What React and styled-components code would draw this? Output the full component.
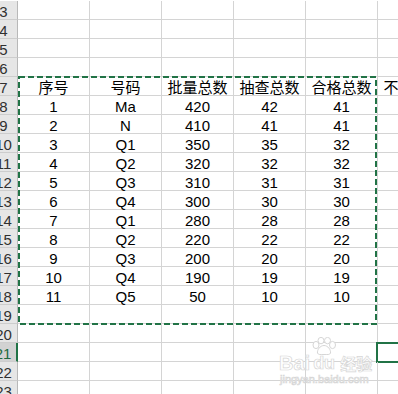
import styled, { createGlobalStyle, css } from "styled-components";

const GREEN = "#217346";

const GlobalStyle = createGlobalStyle`
  html, body {
    margin: 0;
    background: #fff;
    overflow: hidden;
  }
  body {
    font-family: "Liberation Sans", "Noto Sans CJK SC", sans-serif;
  }
`;

const Sheet = styled.div`
  position: relative;
  padding-top: 1px;
  width: 398px;
  height: 394px;
  overflow: hidden;
`;

const Row = styled.div`
  display: grid;
  grid-template-columns: 18px repeat(6, 72px);
  height: 19px;
`;

const RowHead = styled.div`
  box-sizing: border-box;
  display: flex;
  justify-content: center;
  align-items: flex-end;
  padding-right: 10px;
  padding-bottom: 1px;
  background: ${(p) => (p.$active ? "#d2d2d2" : "#e6e6e6")};
  border-right: ${(p) => (p.$active ? `2px solid ${GREEN}` : "1px solid #b8b8b8")};
  border-bottom: 1px solid #cdcdcd;
  color: ${(p) => (p.$active ? "#1d6a40" : "#303030")};
  font-size: 15px;
  line-height: 13px;
  white-space: nowrap;
`;

const Cell = styled.div`
  position: relative;
  box-sizing: border-box;
  display: flex;
  justify-content: center;
  align-items: flex-end;
  border-right: 1px solid #d4d4d4;
  border-bottom: 1px solid #d4d4d4;
  color: #000;
  font-size: 15px;
  line-height: 14px;
  white-space: nowrap;

  ${(p) =>
    p.$selected &&
    css`
      &::after {
        content: "";
        position: absolute;
        top: -1px;
        left: -2px;
        right: -4px;
        bottom: -2px;
        border: 2px solid ${GREEN};
      }
    `}
`;

const Marquee = styled.svg`
  position: absolute;
  left: 18px;
  top: 76px;
  pointer-events: none;
`;

const Watermark = styled.div`
  position: absolute;
  left: 279px;
  top: 339px;
  display: flex;
  flex-direction: column;
  color: #fff;
  -webkit-text-stroke: 0.7px #d6d6d6;
  pointer-events: none;
`;

const Brand = styled.div`
  display: flex;
  align-items: flex-end;
  height: 32px;
`;

const BrandWord = styled.span`
  font-family: "Liberation Sans", sans-serif;
  font-weight: bold;
  font-size: ${(p) => p.$size || 20}px;
  line-height: 16px;
`;

const PawBlock = styled.div`
  display: flex;
  flex-direction: column;
  align-items: center;
  margin: 0 1px;
`;

const CnWord = styled.span`
  font-family: "Noto Sans CJK SC", sans-serif;
  font-weight: bold;
  font-size: 16px;
  line-height: 16px;
  margin-left: 2px;
`;

const Url = styled.span`
  font-family: "Liberation Sans", sans-serif;
  font-size: 11px;
  line-height: 12px;
  margin-top: 2px;
  margin-left: 1px;
`;

const header = ["序号", "号码", "批量总数", "抽查总数", "合格总数", "不合格数"];

const data = [
  [1, "Ma", 420, 42, 41],
  [2, "N", 410, 41, 41],
  [3, "Q1", 350, 35, 32],
  [4, "Q2", 320, 32, 32],
  [5, "Q3", 310, 31, 31],
  [6, "Q4", 300, 30, 30],
  [7, "Q1", 280, 28, 28],
  [8, "Q2", 220, 22, 22],
  [9, "Q3", 200, 20, 20],
  [10, "Q4", 190, 19, 19],
  [11, "Q5", 50, 10, 10],
];

function rowCells(n) {
  if (n === 7) return header;
  if (n >= 8 && n <= 18) return [...data[n - 8], ""];
  return ["", "", "", "", "", ""];
}

function Paw() {
  return (
    <svg width="26" height="18" viewBox="0 0 26 18">
      <g fill="#fff" stroke="#d6d6d6" strokeWidth="1">
        <ellipse cx="5" cy="8" rx="3" ry="3.6" />
        <ellipse cx="10" cy="3.6" rx="3" ry="3.2" />
        <ellipse cx="16.5" cy="3.6" rx="3" ry="3.2" />
        <ellipse cx="21.5" cy="8" rx="3" ry="3.6" />
        <path d="M13 8.5 C9 8.5 6 13 6.5 16 C7 18 10 17.5 13 17.5 C16 17.5 19 18 19.5 16 C20 13 17 8.5 13 8.5 Z" />
      </g>
    </svg>
  );
}

function App() {
  const rows = [];
  for (let n = 3; n <= 23; n++) rows.push(n);

  return (
    <>
      <GlobalStyle />
      <Sheet>
        {rows.map((n) => (
          <Row key={n}>
            <RowHead $active={n === 21}>{n}</RowHead>
            {rowCells(n).map((v, i) => (
              <Cell key={i} $selected={n === 21 && i === 5}>
                {v}
              </Cell>
            ))}
          </Row>
        ))}

        <Marquee width="359" height="249" viewBox="0 0 359 249">
          <rect
            x="1"
            y="1"
            width="357"
            height="247"
            fill="none"
            stroke={GREEN}
            strokeWidth="2"
            strokeDasharray="6 3"
          />
        </Marquee>

        <Watermark>
          <Brand>
            <BrandWord>Bai</BrandWord>
            <PawBlock>
              <Paw />
              <BrandWord $size={18}>du</BrandWord>
            </PawBlock>
            <CnWord>经验</CnWord>
          </Brand>
          <Url>jingyan.baidu.com</Url>
        </Watermark>
      </Sheet>
    </>
  );
}

export default App;
